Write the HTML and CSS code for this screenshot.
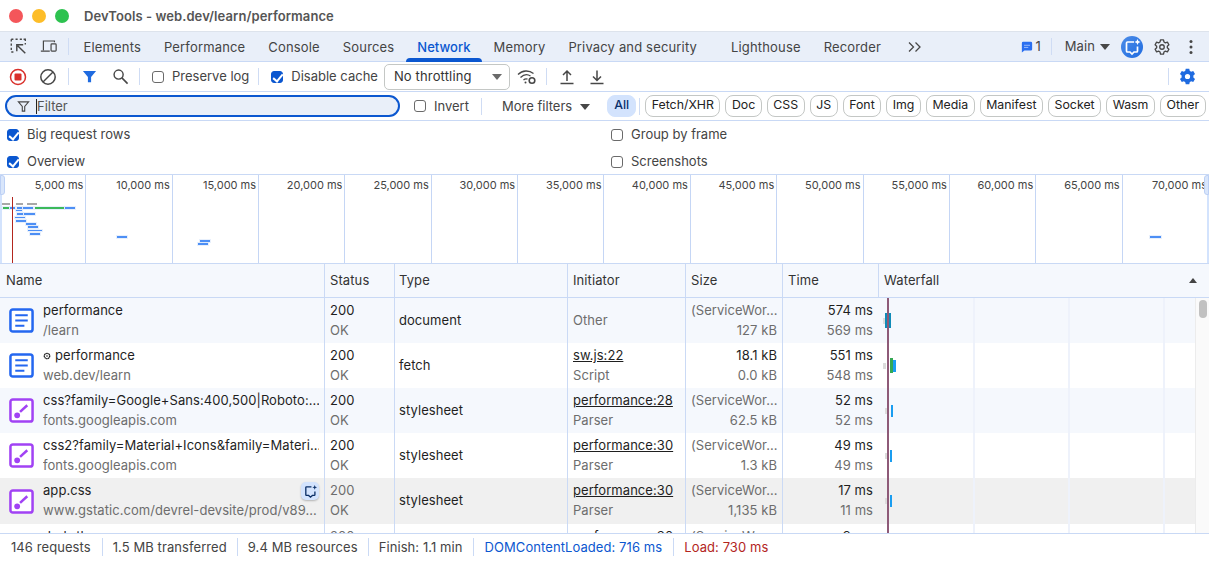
FILE: index.html
```html
<!DOCTYPE html>
<html lang="en">
<head>
<meta charset="utf-8">
<title>DevTools - web.dev/learn/performance</title>
<link rel="stylesheet" href="styles.css">
</head>
<body>
<div class="app">
  <header class="titlebar">
    <span class="light red"></span><span class="light yellow"></span><span class="light green"></span>
    <span class="title">DevTools - web.dev/learn/performance</span>
  </header>

  <nav class="tabs">
    <svg class="ic first" viewBox="0 0 20 20"><path d="M1.500 1.500h2.500M6.500 1.500h2.500M11.500 1.500h2.500M16 1.500h2v2M1.500 1.500v2.500M1.500 6.500v2.500M1.500 11.500v2.500M1.500 16.500h2.500M18 6v1.500" fill="none" stroke="#474747" stroke-width="1.600"/><path d="M18 18 9 9M8 15.500V8h7.500" fill="none" stroke="#474747" stroke-width="1.700"/></svg>
    <svg class="ic" viewBox="0 0 20 20"><path d="M4 14.500V3.500h13v1.500M1 15.500h10.500" fill="none" stroke="#474747" stroke-width="1.400"/><rect x="13" y="7" width="6" height="8.500" rx="1" fill="none" stroke="#474747" stroke-width="1.400"/></svg>
    <span class="sep"></span>
    <span class="tab">Elements</span><span class="tab">Performance</span><span class="tab">Console</span><span class="tab">Sources</span>
    <span class="tab active">Network</span><span class="tab">Memory</span><span class="tab">Privacy and security</span>
    <span class="tab wide">Lighthouse</span><span class="tab">Recorder</span>
    <svg class="more" viewBox="0 0 16 12"><path d="M2 1.500 6.500 6 2 10.500M8.500 1.500 13 6l-4.500 4.500" fill="none" stroke="#474747" stroke-width="1.300"/></svg>
    <span class="tabs-right">
      <svg class="msg" viewBox="0 0 14 14"><path d="M1 2.500A1.500 1.500 0 0 1 2.500 1h9A1.500 1.500 0 0 1 13 2.500v7a1.500 1.500 0 0 1-1.500 1.500H4l-3 2.500z" fill="#2a6ff0"/><path d="M3.500 5h7M3.500 7.500h5" stroke="#a9c6fb" stroke-width="1"/></svg>
      <span class="count">1</span>
      <span class="sep tall"></span>
      <span class="main">Main</span><span class="caret"></span>
      <span class="ai">
        <svg viewBox="0 0 22 22"><path d="M13 6H6.500a1 1 0 0 0-1 1v8a1 1 0 0 0 1 1H9l2 2 2-2h2.500a1 1 0 0 0 1-1v-4.500" fill="none" stroke="#fff" stroke-width="1.700"/><path d="M16.500 3l.9 2.100 2.100.9-2.100.9-.9 2.100-.9-2.100-2.100-.9 2.100-.9z" fill="#fff"/></svg>
      </span>
      <svg class="gear" viewBox="0 0 24 24"><path d="M10 2.500h4l.6 2.800 1.900 1.100 2.700-.9 2 3.500-2.100 1.900v2.200l2.100 1.900-2 3.500-2.700-.9-1.900 1.100-.6 2.800h-4l-.6-2.800-1.900-1.100-2.700.9-2-3.500 2.100-1.900V11L2.800 9l2-3.500 2.700.9 1.900-1.100z" fill="none" stroke="#474747" stroke-width="1.800" stroke-linejoin="round"/><circle cx="12" cy="12" r="3" fill="none" stroke="#474747" stroke-width="1.800"/></svg>
      <svg class="dots" viewBox="0 0 4 16"><circle cx="2" cy="2.500" r="1.500" fill="#474747"/><circle cx="2" cy="8" r="1.500" fill="#474747"/><circle cx="2" cy="13.500" r="1.500" fill="#474747"/></svg>
    </span>
  </nav>

  <div class="toolbar">
    <svg class="t-ic rec" viewBox="0 0 18 18"><circle cx="9" cy="9" r="7.500" fill="none" stroke="#d9302b" stroke-width="1.500"/><rect x="5.500" y="5.500" width="7" height="7" rx="1" fill="#d9302b"/></svg>
    <svg class="t-ic clear" viewBox="0 0 18 18"><circle cx="9" cy="9" r="7.200" fill="none" stroke="#474747" stroke-width="1.500"/><path d="M4 14 14 4" stroke="#474747" stroke-width="1.500"/></svg>
    <span class="sep"></span>
    <svg class="t-ic funnel" viewBox="0 0 16 16"><path d="M1 2h14L9.700 8.500V14H6.300V8.500z" fill="#1f6be0"/></svg>
    <svg class="t-ic search" viewBox="0 0 18 18"><circle cx="7" cy="7" r="4.800" fill="none" stroke="#474747" stroke-width="1.500"/><path d="m10.500 10.500 6 6" stroke="#474747" stroke-width="1.700"/></svg>
    <span class="sep"></span>
    <label class="check preserve"><input type="checkbox">Preserve log</label>
    <span class="sep"></span>
    <label class="check disable"><input type="checkbox" checked>Disable cache</label>
    <span class="select">No throttling<span class="caret"></span></span>
    <svg class="wifi" viewBox="0 0 20 16"><path d="M1 5.500C5.500 1 12 1 16.500 4.500M3.500 8.500C6.500 5.500 10.500 5 13.500 7M6.500 11c1.500-1.300 3-1.300 4-.8" fill="none" stroke="#474747" stroke-width="1.300"/><circle cx="15" cy="11.500" r="2.800" fill="none" stroke="#474747" stroke-width="1.600"/><circle cx="8.500" cy="13.500" r="1" fill="#474747"/></svg>
    <span class="sep"></span>
    <svg class="t-ic up" viewBox="0 0 16 16"><path d="M8 12V2.500M4 6l4-4 4 4M1.500 14.500h13" fill="none" stroke="#474747" stroke-width="1.500"/></svg>
    <svg class="t-ic down" viewBox="0 0 16 16"><path d="M8 1.500V11M4 7.500l4 4 4-4M1.500 14.500h13" fill="none" stroke="#474747" stroke-width="1.500"/></svg>
    <span class="sep push"></span>
    <svg class="t-gear" viewBox="0 0 24 24"><path fill-rule="evenodd" d="M9.500 1h5l.6 3 2 1.200 3-1 2.500 4.300-2.300 2v3l2.300 2-2.500 4.300-3-1-2 1.200-.6 3h-5l-.6-3-2-1.200-3 1L1.400 15.500l2.300-2v-3l-2.300-2L3.900 4.200l3 1 2-1.200zM12 8.300a3.700 3.700 0 1 0 0 7.400 3.700 3.700 0 0 0 0-7.400z" fill="#1f6be0"/></svg>
  </div>

  <div class="filterbar">
    <div class="filter">
      <svg viewBox="0 0 14 14"><path d="M1.500 2h11L8.300 7v5H5.700V7z" fill="none" stroke="#474747" stroke-width="1.200"/></svg>
      <span class="cursor"></span><span class="ph">Filter</span>
    </div>
    <label class="check invert"><input type="checkbox">Invert</label>
    <span class="sep"></span>
    <span class="morefilters">More filters<span class="caret"></span></span>
    <span class="chip on">All</span>
    <span class="sep chipsep"></span>
    <span class="chip">Fetch/XHR</span><span class="chip">Doc</span><span class="chip">CSS</span><span class="chip">JS</span><span class="chip">Font</span><span class="chip">Img</span><span class="chip">Media</span><span class="chip">Manifest</span><span class="chip">Socket</span><span class="chip">Wasm</span><span class="chip">Other</span>
  </div>

  <div class="options">
    <label class="check"><input type="checkbox" checked>Big request rows</label>
    <label class="check"><input type="checkbox">Group by frame</label>
    <label class="check"><input type="checkbox" checked>Overview</label>
    <label class="check"><input type="checkbox">Screenshots</label>
  </div>

  <section class="overview">
    <div class="ticks">
      <span>5,000 ms</span><span>10,000 ms</span><span>15,000 ms</span><span>20,000 ms</span><span>25,000 ms</span><span>30,000 ms</span><span>35,000 ms</span><span>40,000 ms</span><span>45,000 ms</span><span>50,000 ms</span><span>55,000 ms</span><span>60,000 ms</span><span>65,000 ms</span><span>70,000 ms</span>
    </div>
    <span class="strip left"></span><span class="strip right"></span>
    <span class="grip left"></span><span class="grip right"></span>
    <i class="ov grey" style="left:2px;top:203px;width:8px"></i>
    <i class="ov grey" style="left:16px;top:203px;width:7px"></i>
    <i class="ov grey" style="left:27px;top:203px;width:10px"></i>
    <i class="ov green" style="left:3px;top:207px;width:6px"></i>
    <i class="ov blue" style="left:10px;top:207px;width:5px"></i>
    <i class="ov blue" style="left:17px;top:207px;width:5px"></i>
    <i class="ov blue" style="left:23px;top:207px;width:10px"></i>
    <i class="ov green" style="left:35px;top:207px;width:29px"></i>
    <i class="ov blue" style="left:65px;top:207px;width:10px"></i>
    <i class="ov thin" style="left:16px;top:210px;width:6px"></i>
    <i class="ov blue" style="left:17px;top:213px;width:6px"></i>
    <i class="ov blue" style="left:24px;top:213px;width:11px"></i>
    <i class="ov thin" style="left:15px;top:217px;width:10px"></i>
    <i class="ov blue" style="left:16px;top:220px;width:10px"></i>
    <i class="ov blue" style="left:26px;top:223px;width:10px"></i>
    <i class="ov blue" style="left:28px;top:226px;width:10px"></i>
    <i class="ov thin" style="left:28px;top:230px;width:14px"></i>
    <i class="ov blue" style="left:30px;top:233px;width:10px"></i>
    <i class="ov blue" style="left:117px;top:236px;width:10px"></i>
    <i class="ov blue" style="left:200px;top:240px;width:10px"></i>
    <i class="ov blue" style="left:198px;top:243px;width:10px"></i>
    <i class="ov blue" style="left:1150px;top:236px;width:11px"></i>
    <i class="dcl"></i>
  </section>

  <section class="table">
    <div class="head">
      <div>Name</div><div>Status</div><div class="type">Type</div><div>Initiator</div><div>Size</div><div>Time</div>
      <div class="wf-head">Waterfall<span class="sort"></span></div>
    </div>
    <div class="body">
      <div class="rows">
        <div class="row alt">
          <div class="name"><svg class="doc" viewBox="0 0 26 26"><use href="#i-doc"/></svg><p><b>performance</b><small>/learn</small></p></div>
          <div><p><b>200</b><small>OK</small></p></div><div class="mid type">document</div>
          <div class="mid sec">Other</div>
          <div><p><small>(ServiceWor...</small><small class="r">127 kB</small></p></div>
          <div class="num"><p><b>574 ms</b><small>569 ms</small></p></div>
        </div>
        <div class="row">
          <div class="name"><svg class="doc" viewBox="0 0 26 26"><use href="#i-doc"/></svg><p><b><svg class="cog" viewBox="0 0 8 8"><circle cx="4" cy="4" r="2.700" fill="none" stroke="#1f1f1f" stroke-width="1.300" stroke-dasharray="1.500 .3"/><circle cx="4" cy="4" r=".8" fill="#1f1f1f"/></svg>performance</b><small>web.dev/learn</small></p></div>
          <div><p><b>200</b><small>OK</small></p></div><div class="mid type">fetch</div>
          <div><p><b class="link">sw.js:22</b><small>Script</small></p></div>
          <div class="num"><p><b>18.1 kB</b><small>0.0 kB</small></p></div>
          <div class="num"><p><b>551 ms</b><small>548 ms</small></p></div>
        </div>
        <div class="row alt">
          <div class="name"><svg class="doc" viewBox="0 0 26 26"><use href="#i-css"/></svg><p><b>css?family=Google+Sans:400,500|Roboto:...</b><small>fonts.googleapis.com</small></p></div>
          <div><p><b>200</b><small>OK</small></p></div><div class="mid type">stylesheet</div>
          <div><p><b class="link">performance:28</b><small>Parser</small></p></div>
          <div><p><small>(ServiceWor...</small><small class="r">62.5 kB</small></p></div>
          <div class="num"><p><b>52 ms</b><small>52 ms</small></p></div>
        </div>
        <div class="row">
          <div class="name"><svg class="doc" viewBox="0 0 26 26"><use href="#i-css"/></svg><p><b>css2?family=Material+Icons&amp;family=Materi...</b><small>fonts.googleapis.com</small></p></div>
          <div><p><b>200</b><small>OK</small></p></div><div class="mid type">stylesheet</div>
          <div><p><b class="link">performance:30</b><small>Parser</small></p></div>
          <div><p><small>(ServiceWor...</small><small class="r">1.3 kB</small></p></div>
          <div class="num"><p><b>49 ms</b><small>49 ms</small></p></div>
        </div>
        <div class="row hover">
          <div class="name"><svg class="doc" viewBox="0 0 26 26"><use href="#i-css"/></svg><p><b>app.css</b><small>www.gstatic.com/devrel-devsite/prod/v89...</small></p>
            <span class="askai"><svg viewBox="0 0 16 16"><path d="M9 3H3.700a.7.7 0 0 0-.7.700v7.800a.7.700 0 0 0 .7.700H6L8 14l2-1.800h2a.7.700 0 0 0 .7-.7V8" fill="none" stroke="#0b2f66" stroke-width="1.400"/><path d="m12.500 1 .7 1.800 1.800.7-1.800.7-.7 1.800-.7-1.800-1.800-.7 1.800-.7z" fill="#0b2f66"/></svg></span></div>
          <div class="dim"><p><b>200</b><small>OK</small></p></div><div class="mid type">stylesheet</div>
          <div><p><b class="link">performance:30</b><small>Parser</small></p></div>
          <div><p><small>(ServiceWor...</small><small class="r">1,135 kB</small></p></div>
          <div class="num"><p><b>17 ms</b><small>11 ms</small></p></div>
        </div>
        <div class="row">
          <div class="name"><svg class="doc" viewBox="0 0 26 26"><use href="#i-css"/></svg><p><b>dark-theme.css</b><small>www.gstatic.com</small></p></div>
          <div class="dim"><p><b>200</b><small>OK</small></p></div><div class="mid type">stylesheet</div>
          <div><p><b class="link">performance:30</b><small>Parser</small></p></div>
          <div><p><small>(ServiceWor...</small><small class="r">1.1 kB</small></p></div>
          <div class="num"><p><b>9 ms</b><small>9 ms</small></p></div>
        </div>
      </div>
      <div class="wf-overlay">
        <i class="gl" style="left:93px"></i><i class="gl" style="left:188px"></i><i class="gl" style="left:283px"></i>
        <i class="bar q" style="left:3px;top:20px;height:6px;width:3px"></i><i class="bar teal" style="left:5px;top:15px;height:15px;width:6px"></i>
        <i class="bar q" style="left:3px;top:65px;height:6px;width:3px"></i><i class="bar green" style="left:10px;top:60px;height:15px;width:3px"></i><i class="bar sky" style="left:13px;top:62px;height:12px;width:3px"></i>
        <i class="bar q" style="left:5px;top:110px;height:6px;width:3px"></i><i class="bar sky" style="left:11px;top:107px;height:12px;width:2px"></i>
        <i class="bar q" style="left:5px;top:155px;height:6px;width:3px"></i><i class="bar sky" style="left:10px;top:152px;height:12px;width:2px"></i>
        <i class="bar q" style="left:5px;top:200px;height:6px;width:3px"></i><i class="bar sky" style="left:10px;top:197px;height:12px;width:2px"></i>
        <i class="load"></i>
      </div>
      <div class="scrollbar"><span></span></div>
    </div>
  </section>

  <footer class="status">
    <span>146 requests</span><span>1.5 MB transferred</span><span>9.4 MB resources</span><span>Finish: 1.1 min</span><span class="dclt">DOMContentLoaded: 716 ms</span><span class="loadt">Load: 730 ms</span>
  </footer>
</div>

<svg class="defs" width="0" height="0">
  <symbol id="i-doc" viewBox="0 0 26 26"><rect x="1.500" y="1.500" width="23" height="23" rx="2.500" fill="#fff" stroke="#2467f0" stroke-width="2.600"/><path d="M6.500 7.500h13M6.500 13h13M6.500 18.500h9.500" stroke="#2467f0" stroke-width="2.200"/></symbol>
  <symbol id="i-css" viewBox="0 0 26 26"><rect x="1.500" y="1.500" width="23" height="23" rx="2.500" fill="#fff" stroke="#a142f4" stroke-width="2.600"/><path d="M19 7.500 11.500 14.500" stroke="#a142f4" stroke-width="2.600"/><circle cx="8.500" cy="18" r="3" fill="#a142f4"/></symbol>
</svg>
</body>
</html>
```
FILE: styles.css
```css
* { box-sizing: border-box; }
html, body { margin: 0; height: 100%; overflow: hidden; background: #fff; }
body { font: 13px/1.2 Inter, "Noto Sans", sans-serif; color: #1f1f1f; }
p { margin: 0; }
.defs { position: absolute; }
.app { width: 1209px; height: 562px; display: flex; flex-direction: column; overflow: hidden; position: relative; }

.titlebar { height: 32px; flex: none; display: flex; align-items: center; padding: 1px 0 0 9px; background: #fff; border-bottom: 1px solid #dde3ec; }
.light { width: 14px; height: 14px; border-radius: 50%; margin-right: 9px; margin-top: -1px; }
.red { background: #f4565a; } .yellow { background: #fdbd28; } .green { background: #2dc24f; }
.title { margin: 2px 0 0 6px; font-weight: 600; font-size: 13px; letter-spacing: .08px; color: #555; }

.tabs { height: 30px; flex: none; display: flex; align-items: center; background: #e9eff9; border-bottom: 1px solid #c9d9f5; padding-left: 10px; }
.ic { width: 17px; height: 17px; margin-right: 13px; }
.sep { width: 1px; height: 17px; background: #cfdcf4; flex: none; }
.tabs > .sep { margin: 0 3px 0 -2px; }
.tab { padding: 0 11.500px; line-height: 31px; color: #444; position: relative; height: 29px; white-space: nowrap; letter-spacing: .16px; }
.active { color: #0b57d0; font-weight: 500; letter-spacing: .02px; }
.active::after { content: ""; position: absolute; left: 0; right: 0; bottom: -1px; height: 4px; background: #0b57d0; border-radius: 4px 4px 0 0; }
.wide { margin-left: 11px; }
.more { width: 16px; height: 12px; margin: 0 0 0 14px; }
.tabs-right { margin-left: auto; display: flex; align-items: center; padding-right: 16px; }
.msg { width: 12px; height: 12px; margin-right: 2px; }
.count { margin-right: 10px; color: #444; }
.tall { margin-right: 13px; }
.main { color: #444; margin-right: 5px; letter-spacing: .1px; }
.caret { width: 0; height: 0; border: 5px solid transparent; border-top: 6px solid #474747; border-bottom: 0; display: inline-block; }
.ai { width: 22px; height: 22px; margin: 0 10px 0 11px; border-radius: 50%; background: linear-gradient(135deg, #4c8de8, #1f6be0); display: flex; }
.ai svg { width: 22px; height: 22px; }
.gear { width: 18px; height: 18px; margin-right: 18px; }
.dots { width: 4px; height: 16px; }

.toolbar { height: 30px; flex: none; display: flex; align-items: center; border-bottom: 1px solid #c9d9f5; padding-left: 9px; color: #444; }
.t-ic { width: 18px; height: 18px; flex: none; }
.rec { margin-right: 12px; }
.clear { margin-right: 11px; }
.toolbar > .sep { height: 17px; }
.funnel { width: 15px; height: 15px; margin: 0 0 0 13px; }
.search { width: 17px; height: 17px; margin: 0 10px 0 15px; }
.check { display: inline-flex; align-items: center; color: #444; white-space: nowrap; }
.check input { appearance: none; width: 12px; height: 12px; margin: 0 8px 0 0; border: 1px solid #6a6a6a; border-radius: 3px; background: #fff; position: relative; flex: none; }
.check input:checked { background: #0b57d0; border-color: #0b57d0; }
.check input:checked::after { content: ""; position: absolute; left: 3px; top: 0; width: 4px; height: 8px; border: solid #fff; border-width: 0 2px 2px 0; transform: rotate(40deg); }
.preserve { margin: 0 9px 0 12px; }
.disable { margin-left: 12px; }
.select { width: 126px; height: 26px; margin-left: 6px; padding: 0 7px 0 9px; border: 1px solid #c4c7c5; border-radius: 5px; display: flex; align-items: center; justify-content: space-between; color: #333; letter-spacing: .15px; }
.select .caret { border-top-color: #6a6a6a; margin-top: 1px; }
.wifi { width: 20px; height: 16px; margin: 0 9px 0 7px; }
.up { width: 16px; height: 16px; margin: 0 15px 0 12px; }
.down { width: 16px; height: 16px; margin-left: -1px; }
.push { margin-left: auto; }
.t-gear { width: 17px; height: 17px; margin: 0 13px 0 10px; }

.filterbar { height: 29px; flex: none; display: flex; align-items: center; padding: 0 0 0 5px; border-bottom: 1px solid #c9d9f5; }
.filter { width: 395px; height: 22px; flex: none; border: 2px solid #0b57d0; border-radius: 11px; background: #e9eff9; display: flex; align-items: center; padding: 1px 0 0 10px; color: #555; }
.filter svg { width: 13px; height: 13px; margin-right: 6px; }
.cursor { width: 1px; height: 15px; background: #222; }
.ph { color: #555; }
.invert { margin-left: 14px; padding-top: 2px; }
.invert input { margin-top: -2px; }
.filterbar > .sep { margin-left: 12px; }
.morefilters { margin-left: 20px; padding-top: 2px; color: #444; display: flex; align-items: center; gap: 8px; margin-right: 17px; white-space: nowrap; flex: none; }
.chip { height: 22px; padding: 0 5.500px 1px; margin-right: 5px; border: 1px solid #c4c7c5; border-radius: 8px; display: flex; align-items: center; font-size: 12.350px; color: #222; flex: none; white-space: nowrap; }
.chip.on { background: #d3e3fd; border-color: #d3e3fd; color: #0a2f6b; font-weight: 500; margin-right: 3px; padding: 0 6px 1px; width: 29px; justify-content: center; }
.filterbar > .chipsep { margin: 0 5px 0 0; height: 17px; }

.options { height: 54px; flex: none; display: grid; grid-template-columns: 1fr 1fr; grid-auto-rows: 27px; padding-left: 7px; border-bottom: 1px solid #c9d9f5; align-items: center; }
.options .check:nth-child(even) { padding-left: 3px; }
.options .check input { margin-right: 8px; }

.overview { height: 89px; flex: none; border-bottom: 1px solid #c9d9f5; }
.ticks { height: 88px; display: grid; grid-template-columns: repeat(14, 1fr); }
.ticks span { border-right: 1px solid #c5d6f5; text-align: right; padding: 4px 2px 0 0; font-size: 11px; line-height: 13px; color: #444; white-space: nowrap; }
.ticks span:last-child { border-right: 0; }
.strip { position: absolute; top: 175px; width: 2px; height: 88px; background: #d3e3fd; }
.strip.left { left: 0; }
.strip.right { right: 0; }
.grip { position: absolute; top: 175px; width: 5px; height: 20px; background: #d9e6fb; border: 1px solid #bcd0f5; }
.grip.left { left: 0; border-radius: 0 3px 3px 0; }
.grip.right { right: 0; border-radius: 3px 0 0 3px; }
.ov { position: absolute; height: 2px; box-shadow: 0 0 0 1px rgba(210,226,250,.5); }
.ov.grey { background: #a8a8a8; box-shadow: none; }
.ov.green { background: #3cb95a; }
.ov.blue { background: #4d8ff5; }
.ov.thin { background: #4d8ff5; height: 1px; }
.dcl { position: absolute; left: 12px; top: 197px; width: 1px; height: 66px; background: #b3261e; }

.table { flex: 1; min-height: 0; display: flex; flex-direction: column; }
.head, .row { display: grid; grid-template-columns: 324px 70px 173px 118px 97px 96px 331px; }
.head { height: 34px; flex: none; background: #f5f8fd; border-bottom: 1px solid #c9d9f5; color: #333; letter-spacing: .1px; }
.head > div { padding-left: 5px; line-height: 33px; border-left: 1px solid #cbdaf5; }
.head > div:first-child { border-left: 0; padding-left: 6px; }
.head > .type, .row > .type { padding-left: 4px; }
.wf-head { position: relative; }
.sort { position: absolute; right: 12px; top: 14px; width: 0; height: 0; border: 4px solid transparent; border-bottom: 5px solid #444; border-top: 0; }
.body { flex: 1; min-height: 0; overflow: hidden; position: relative; }
.rows { position: relative; }
.row { height: 45px; }
.row.alt { background: #f5f8fd; }
.row.hover { background: #f0f0f0; height: 46px; }
.row > div { border-left: 1px solid #cbdaf5; padding: 0 5px; display: flex; align-items: center; min-width: 0; position: relative; letter-spacing: .06px; }
.row > div:first-child { border-left: 0; }
.row p { min-width: 0; width: 100%; margin-top: -1px; }
.row.hover p { margin-top: -2px; }
.row b, .row small { display: block; font-weight: 400; font-size: 13px; line-height: 20px; white-space: nowrap; overflow: hidden; }
.row small { color: #6d6d6d; }
.dim b { color: #6d6d6d; }
.sec { color: #6d6d6d; }
.num { text-align: right; }
.r { text-align: right; }
.link { text-decoration: underline; }
.name { padding-left: 9px !important; }
.doc { width: 25px; height: 25px; margin-right: 9px; flex: none; }
.cog { width: 8px; height: 8px; margin-right: 4px; }
.askai { position: absolute; right: 5px; top: 4px; width: 18px; height: 18px; border-radius: 5px; background: #d3e3fd; display: flex; align-items: center; justify-content: center; box-shadow: 0 1px 2px rgba(0,0,0,.25); }
.askai svg { width: 15px; height: 15px; }
.wf-overlay { position: absolute; left: 880px; top: 0; bottom: 0; width: 315px; pointer-events: none; }
.gl { position: absolute; top: 0; bottom: 0; width: 2px; background: #eef2fb; }
.bar { position: absolute; display: block; }
.q { background: #dcdcdc; }
.teal { background: #0f8bb8; }
.green.bar { background: #34a853; }
.sky { background: #1a9df0; }
.load { position: absolute; left: 7px; top: 0; bottom: 0; width: 2px; background: #8e5a78; }
.scrollbar { position: absolute; right: 0; top: 0; bottom: 0; width: 14px; background: #fafafa; border-left: 1px solid #ececec; }
.scrollbar span { display: block; width: 8px; height: 18px; margin: 2px 0 0 3px; border-radius: 4px; background: #c1c1c1; }

.status { height: 29px; flex: none; display: flex; align-items: center; padding-bottom: 2px; border-top: 1px solid #c9d9f5; background: #fff; color: #444; letter-spacing: .08px; }
.status span { padding: 0 10px; border-left: 1px solid #cbdaf5; line-height: 18px; white-space: nowrap; }
.status span:first-child { border-left: 0; padding: 0 11px; }
.status .dclt { color: #0b57d0; padding: 0 11px; }
.loadt { color: #b3261e; }
```
